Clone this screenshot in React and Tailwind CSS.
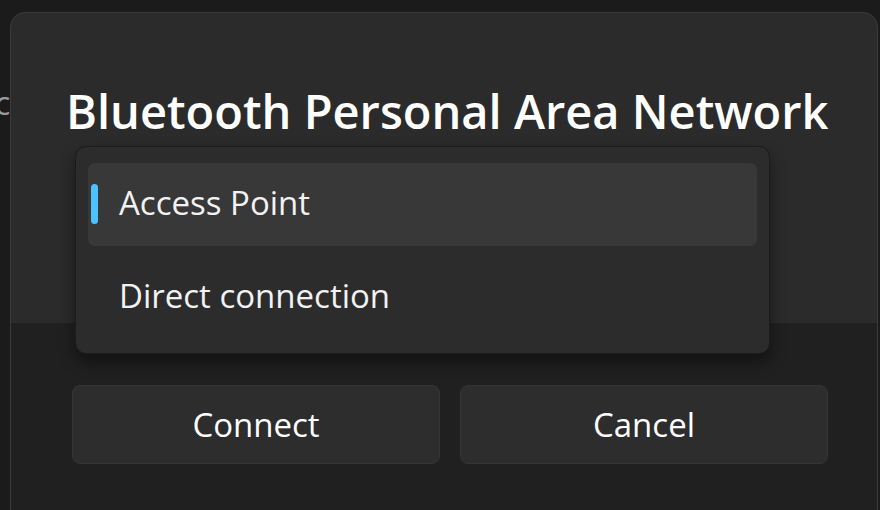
import React from 'react';

const font = { fontFamily: '"Open Sans", "Noto Sans", sans-serif' };

const MenuItem = ({ label, selected }) => (
  <div
    className={`relative flex h-[83px] items-center rounded-[7px] pl-[31px] ${
      selected ? 'bg-[#383838]' : ''
    }`}
  >
    {selected && (
      <span className="absolute left-[3px] top-[21px] h-[40px] w-[7px] rounded-full bg-[#4cc2ff]" />
    )}
    <span className="pb-[4px] text-[33px] text-[#f2f2f2]">{label}</span>
  </div>
);

const Button = ({ children }) => (
  <button className="flex h-[79px] w-[368px] items-center justify-center rounded-[8px] border border-[#353535] bg-[#2d2d2d] text-[33px] text-white">
    {children}
  </button>
);

export default function App() {
  return (
    <div
      className="relative h-[510px] w-[880px] overflow-hidden bg-[#1b1b1b] pl-[10px] pt-[12px]"
      style={font}
    >
      <span className="absolute left-[-24px] top-[78px] text-[33px] text-[#9a9a9a]">ec</span>
      <div className="relative flex h-[520px] w-[868px] flex-col overflow-hidden rounded-t-[15px] border border-[#3b3b3b] bg-[#2b2b2b]">
        <div className="h-[310px] pl-[55px] pt-[68px]">
          <h1 className="whitespace-nowrap text-[47px] font-semibold leading-[60px] text-white">
            Bluetooth Personal Area Network
          </h1>
        </div>
        <div className="flex flex-1 gap-[20px] bg-[#202020] pl-[61px] pt-[62px]">
          <Button>Connect</Button>
          <Button>Cancel</Button>
        </div>

        <div className="absolute left-[64px] top-[133px] flex w-[695px] flex-col rounded-[11px] border border-[#1c1c1c] bg-[#2c2c2c] px-[12px] pt-[16px] pb-[14px] shadow-[0_8px_16px_rgba(0,0,0,0.45)]">
          <MenuItem label="Access Point" selected />
          <div className="h-[10px]" />
          <MenuItem label="Direct connection" />
        </div>
      </div>
    </div>
  );
}
